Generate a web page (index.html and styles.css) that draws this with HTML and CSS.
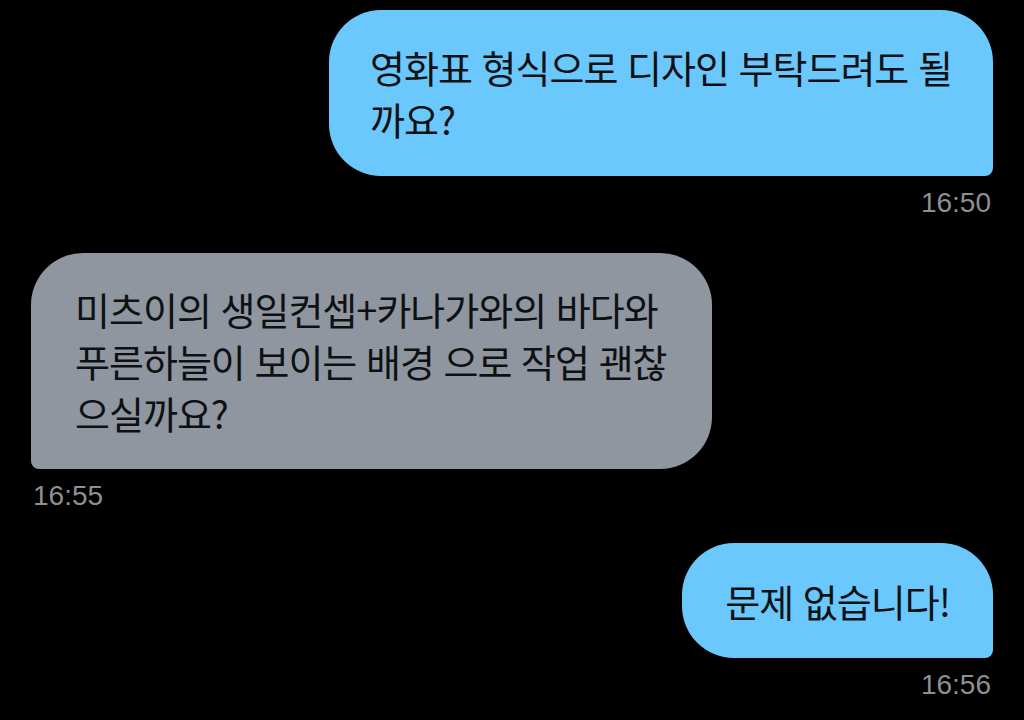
FILE: index.html
```html
<!DOCTYPE html>
<html lang="ko">
  <head>
    <meta charset="UTF-8" />
    <title>Chat</title>
    <link rel="stylesheet" href="styles.css">
  </head>
  <body>
    <div class="chat">
      <div class="message sent">
        <div class="bubble bubble-wide">영화표 형식으로 디자인 부탁드려도 될까요?</div>
        <span class="time">16:50</span>
      </div>

      <div class="message received">
        <div class="bubble bubble-long">미츠이의 생일컨셉+카나가와의 바다와 푸른하늘이 보이는 배경 으로 작업 괜찮으실까요?</div>
        <span class="time">16:55</span>
      </div>

      <div class="message sent">
        <div class="bubble bubble-short">문제 없습니다!</div>
        <span class="time">16:56</span>
      </div>
    </div>
  </body>
</html>
```

FILE: styles.css
```css
body {
  margin: 0;
  padding: 0;
  background-color: #000;
  height: 100vh;
  overflow: hidden;
  font-family: "Noto Sans CJK KR", "Noto Sans", sans-serif;
}

.chat {
  display: flex;
  flex-direction: column;
  padding: 10px 31px 0 31px;
}

.message {
  display: flex;
  flex-direction: column;
}

.message.sent {
  align-items: flex-end;
}

.message.received {
  align-items: flex-start;
}

.message.sent + .message.received {
  margin-top: 35px;
}

.message.received + .message.sent {
  margin-top: 32px;
}

.bubble {
  padding: 31px 41px;
  font-size: 38px;
  line-height: 52px;
  letter-spacing: -1px;
  color: #0e1114;
  border-radius: 52px;
}

.sent .bubble {
  background-color: #6bc8fc;
  border-bottom-right-radius: 8px;
}

.received .bubble {
  background-color: #8f969f;
  border-bottom-left-radius: 8px;
  padding: 30px 44px;
}

.bubble-wide {
  width: 582px;
}

.bubble-long {
  width: 593px;
}

.bubble-short {
  padding: 32px 43px 31px;
}

.time {
  margin-top: 12px;
  font-family: "Liberation Sans", Arial, sans-serif;
  font-size: 28px;
  line-height: 30px;
  color: #8c8f94;
  padding: 0 2px;
}
```
